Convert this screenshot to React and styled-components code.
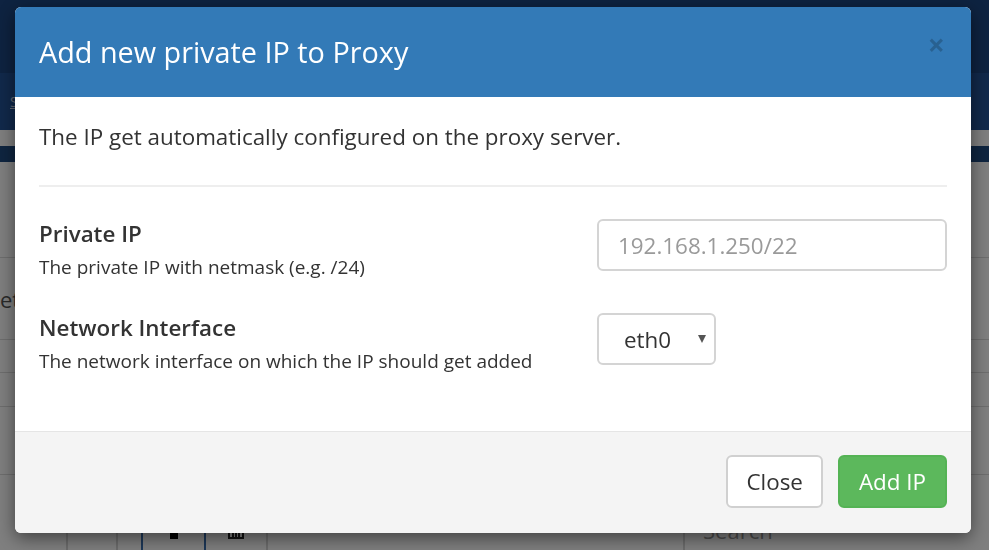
import styled, { createGlobalStyle } from 'styled-components';

const GlobalStyle = createGlobalStyle`
  html, body {
    margin: 0;
    padding: 0;
    height: 100%;
    overflow: hidden;
    background: #fff;
    font-family: "Open Sans", "Liberation Sans", sans-serif;
  }
  * { box-sizing: border-box; }
`;

// Page behind the backdrop
const Page = styled.div`
  height: 100vh;
  display: flex;
  flex-direction: column;
`;

const TopBar = styled.div`
  height: 73px;
  flex: none;
  background: #1c4682;
`;

const SubBar = styled.div`
  height: 57px;
  flex: none;
  background: #225296;
  display: flex;
  align-items: center;
  padding-left: 10px;
`;

const SubLink = styled.a`
  color: #c8d3e3;
  font-size: 14px;
  text-decoration: underline;
`;

const Strip = styled.div`
  height: 16px;
  flex: none;
  background: ${(p) => p.$color};
`;

const Content = styled.div`
  flex: 1;
  display: flex;
  flex-direction: column;
`;

const Row = styled.div`
  height: ${(p) => p.$h}px;
  flex: none;
  border-bottom: 1px solid #dcdcdc;
  display: flex;
  align-items: center;
  font-size: 22px;
  color: #555;
`;

const Toolbar = styled.div`
  flex: 1;
  display: flex;
  align-items: stretch;
  padding-left: 66px;
  padding-top: 12px;
`;

const ToolCell = styled.div`
  width: ${(p) => p.$w}px;
  flex: none;
  border-left: 2px solid ${(p) => (p.$active ? '#3a6fb0' : '#d8d8d8')};
  display: flex;
  justify-content: center;
  padding-top: 44px;
`;

const SearchBox = styled.div`
  margin-left: auto;
  width: 306px;
  border-left: 2px solid #d8d8d8;
  padding: 28px 0 0 18px;
  font-size: 22px;
  color: #999;
`;

const Backdrop = styled.div`
  position: fixed;
  inset: 0;
  background: rgba(0, 0, 0, 0.5);
`;

// Modal
const Modal = styled.div`
  position: fixed;
  top: 7px;
  left: 15px;
  width: 956px;
  background: #fff;
  border-radius: 6px;
  overflow: hidden;
  box-shadow: 0 5px 18px rgba(0, 0, 0, 0.5);
  color: #333;
`;

const Header = styled.div`
  height: 90px;
  background: #337ab7;
  padding: 0 24px;
  display: flex;
  align-items: center;
  justify-content: space-between;
`;

const Title = styled.h4`
  margin: 0;
  font-size: 28.8px;
  font-weight: 400;
  color: #fff;
  line-height: 1.4;
`;

const CloseX = styled.button`
  align-self: flex-start;
  margin-top: 23px;
  margin-right: 2px;
  padding: 0;
  border: none;
  background: none;
  font-family: "Open Sans", "Liberation Sans", sans-serif;
  font-size: 30px;
  font-weight: 700;
  line-height: 1;
  color: #000;
  opacity: 0.2;
  cursor: pointer;
`;

const Body = styled.div`
  padding: 26px 24px 24px;
`;

const Intro = styled.p`
  margin: 0 0 34px;
  font-size: 22.4px;
  line-height: 28px;
`;

const Divider = styled.hr`
  margin: 0 0 32px;
  border: none;
  border-top: 2px solid #eee;
`;

const FormRow = styled.div`
  display: grid;
  grid-template-columns: 558px 1fr;
  align-items: start;
  margin-bottom: 35px;
`;

const LabelCol = styled.div`
  padding-top: 1px;
`;

const Label = styled.label`
  display: block;
  font-size: 22.4px;
  font-weight: 600;
  line-height: 28px;
  margin-bottom: 8px;
`;

const Help = styled.div`
  font-size: 19px;
  line-height: 22px;
`;

const Input = styled.input`
  width: 100%;
  height: 52px;
  border: 2px solid #d4d4d4;
  border-radius: 6px;
  padding: 0 19px;
  font-family: "Open Sans", "Liberation Sans", sans-serif;
  font-size: 22.4px;
  color: #333;
  outline: none;

  &::placeholder {
    color: #9a9a9a;
  }
`;

const SelectWrap = styled.div`
  position: relative;
  width: 119px;
`;

const Select = styled.select`
  appearance: none;
  width: 100%;
  height: 52px;
  border: 2px solid #d4d4d4;
  border-radius: 6px;
  padding: 0 0 0 25px;
  background: #fff;
  font-family: "Open Sans", "Liberation Sans", sans-serif;
  font-size: 22.4px;
  color: #333;
  outline: none;
`;

const Caret = styled.span`
  position: absolute;
  right: 10px;
  top: 22px;
  width: 0;
  height: 0;
  border-left: 4px solid transparent;
  border-right: 4px solid transparent;
  border-top: 8px solid #555;
  pointer-events: none;
`;

const Footer = styled.div`
  border-top: 1px solid #e5e5e5;
  background: #f4f4f4;
  padding: 23px 24px 25px;
  display: flex;
  justify-content: flex-end;
  gap: 15px;
`;

const Button = styled.button`
  height: 53px;
  padding: 0 ${(p) => (p.$primary ? 19 : 18)}px;
  border-radius: 6px;
  border: 2px solid ${(p) => (p.$primary ? '#54b354' : '#d0d0d0')};
  background: ${(p) => (p.$primary ? '#5cb85c' : '#fff')};
  color: ${(p) => (p.$primary ? '#fff' : '#333')};
  font-family: "Open Sans", "Liberation Sans", sans-serif;
  font-size: 22.4px;
  cursor: pointer;
`;

const App = () => {
  return (
    <>
      <GlobalStyle />
      <Page>
        <TopBar />
        <SubBar>
          <SubLink>Status</SubLink>
        </SubBar>
        <Strip $color="#fff" />
        <Strip $color="#1e4a80" />
        <Content>
          <Row $h={96} />
          <Row $h={82}>ett</Row>
          <Row $h={33} />
          <Row $h={34} />
          <Row $h={68} />
          <Toolbar>
            <ToolCell $w={50} />
            <ToolCell $w={25} />
            <ToolCell $w={63} $active>
              <svg width="8" height="8" viewBox="0 0 8 8">
                <rect x="0" y="0" width="8" height="8" fill="#000" />
              </svg>
            </ToolCell>
            <ToolCell $w={62} $active>
              <svg width="16" height="8" viewBox="0 0 16 8">
                <path d="M1 0v7h14V0M5 0v7M8 0v7M11 0v7" stroke="#222" strokeWidth="2" fill="none" />
              </svg>
            </ToolCell>
            <ToolCell $w={2} />
            <SearchBox>Search</SearchBox>
          </Toolbar>
        </Content>
      </Page>
      <Backdrop />

      <Modal>
        <Header>
          <Title>Add new private IP to Proxy</Title>
          <CloseX aria-label="Close">×</CloseX>
        </Header>
        <Body>
          <Intro>The IP get automatically configured on the proxy server.</Intro>
          <Divider />
          <FormRow>
            <LabelCol>
              <Label>Private IP</Label>
              <Help>The private IP with netmask (e.g. /24)</Help>
            </LabelCol>
            <Input placeholder="192.168.1.250/22" />
          </FormRow>
          <FormRow>
            <LabelCol>
              <Label>Network Interface</Label>
              <Help>The network interface on which the IP should get added</Help>
            </LabelCol>
            <SelectWrap>
              <Select defaultValue="eth0">
                <option value="eth0">eth0</option>
                <option value="eth1">eth1</option>
              </Select>
              <Caret />
            </SelectWrap>
          </FormRow>
        </Body>
        <Footer>
          <Button>Close</Button>
          <Button $primary>Add IP</Button>
        </Footer>
      </Modal>
    </>
  );
};

export default App;
